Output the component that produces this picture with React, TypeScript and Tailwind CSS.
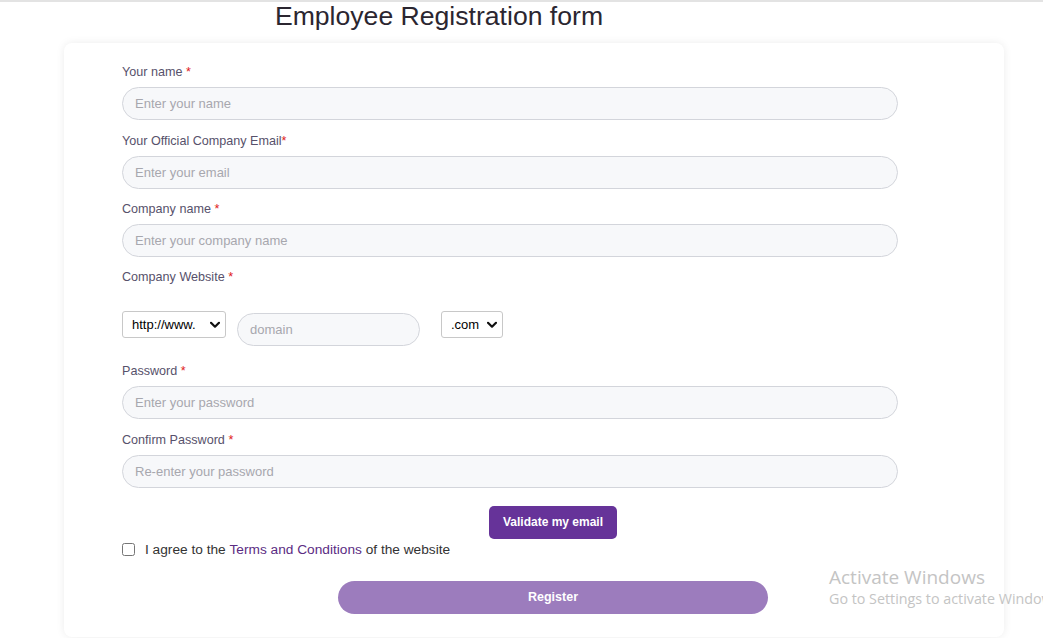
import React from 'react';

const Chevron = () => (
    <svg width="10" height="7" viewBox="0 0 10 7" className="pointer-events-none absolute right-[6px] top-1/2 -translate-y-1/2">
        <path d="M1 1.2l4 4 4-4" fill="none" stroke="#111" strokeWidth="2.2" strokeLinecap="round" strokeLinejoin="round" />
    </svg>
);

function Field({ label, placeholder, tight }: { label: string; placeholder: string; tight?: boolean }) {
    return (
        <div className="flex flex-col">
            <label className="text-[12.6px] leading-[14px] text-[#57516b] mb-[8px]">
                {label}
                {tight ? '' : ' '}
                <span className="text-[#e01b1b]">*</span>
            </label>
            <input
                type="text"
                placeholder={placeholder}
                className="w-[90%] h-[33px] rounded-full border border-[#d3d5db] bg-[#f7f8fa] px-[12px] text-[13px] text-[#333] placeholder:text-[#a7a7ae] outline-none"
            />
        </div>
    );
}

export default function App() {
    return (
        <div className="relative min-h-[638px] w-full bg-white border-t-2 border-[#e3e3e3] font-['Liberation_Sans',Arial,sans-serif] overflow-hidden">
            {/* Title */}
            <div className="w-[878px] text-center">
                <h1 className="text-[26.6px] leading-[28px] text-[#2b2630]">Employee Registration form</h1>
            </div>

            {/* Card */}
            <div className="ml-[64px] w-[940px] mt-[13px] h-[594px] rounded-[8px] bg-white shadow-[0_0_8px_rgba(0,0,0,0.08)] pl-[58px] pr-[20px] pt-[22px]">
                <div className="flex flex-col gap-[13.5px]">
                    <Field label="Your name" placeholder="Enter your name" />
                    <Field label="Your Official Company Email" placeholder="Enter your email" tight />
                    <Field label="Company name" placeholder="Enter your company name" />
                </div>

                {/* Website */}
                <div className="mt-[13px]">
                    <label className="block text-[12.6px] leading-[14px] text-[#57516b]">
                        Company Website <span className="text-[#e01b1b]">*</span>
                    </label>
                    <div className="flex items-start mt-[27px]">
                        <div className="relative w-[104px] h-[27px]">
                            <select className="appearance-none w-full h-full rounded-[3px] border border-[#c8c8c8] bg-white pl-[9px] text-[13px] text-black outline-none">
                                <option>http://www.</option>
                                <option>https://www.</option>
                            </select>
                            <Chevron />
                        </div>
                        <input
                            type="text"
                            placeholder="domain"
                            className="ml-[11px] mt-[2px] w-[183px] h-[33px] rounded-full border border-[#d3d5db] bg-[#f7f8fa] px-[12px] text-[13px] placeholder:text-[#a7a7ae] outline-none"
                        />
                        <div className="relative ml-[21px] w-[62px] h-[27px]">
                            <select className="appearance-none w-full h-full rounded-[3px] border border-[#c8c8c8] bg-white pl-[9px] text-[13px] text-black outline-none">
                                <option>.com</option>
                                <option>.org</option>
                            </select>
                            <Chevron />
                        </div>
                    </div>
                </div>

                <div className="flex flex-col gap-[13.5px] mt-[18px]">
                    <Field label="Password" placeholder="Enter your password" />
                    <Field label="Confirm Password" placeholder="Re-enter your password" />
                </div>

                <div className="flex justify-center mt-[18px]">
                    <button className="h-[33px] px-[14px] rounded-[5px] bg-[#663399] text-white text-[12px] font-bold">
                        Validate my email
                    </button>
                </div>

                <label className="flex items-center mt-[2px] text-[13.7px] leading-[17px] text-[#333]">
                    <input type="checkbox" className="w-[13px] h-[13px] m-0 mr-[10px]" />
                    I agree to the&nbsp;<span className="text-[#5b2c83]">Terms and Conditions</span>&nbsp;of the website
                </label>

                <div className="flex justify-center mt-[23px]">
                    <button className="w-[430px] h-[33px] rounded-full bg-[#9c7cbd] text-white text-[12.5px] font-bold">
                        Register
                    </button>
                </div>
            </div>

            {/* Windows watermark */}
            <div className="absolute left-[829px] top-[564px] whitespace-nowrap font-['Open_Sans',sans-serif] text-[#c4c4c4]">
                <div className="text-[19px] leading-[23px]">Activate Windows</div>
                <div className="text-[14.3px] leading-[20px]">Go to Settings to activate Windows.</div>
            </div>
        </div>
    );
}
